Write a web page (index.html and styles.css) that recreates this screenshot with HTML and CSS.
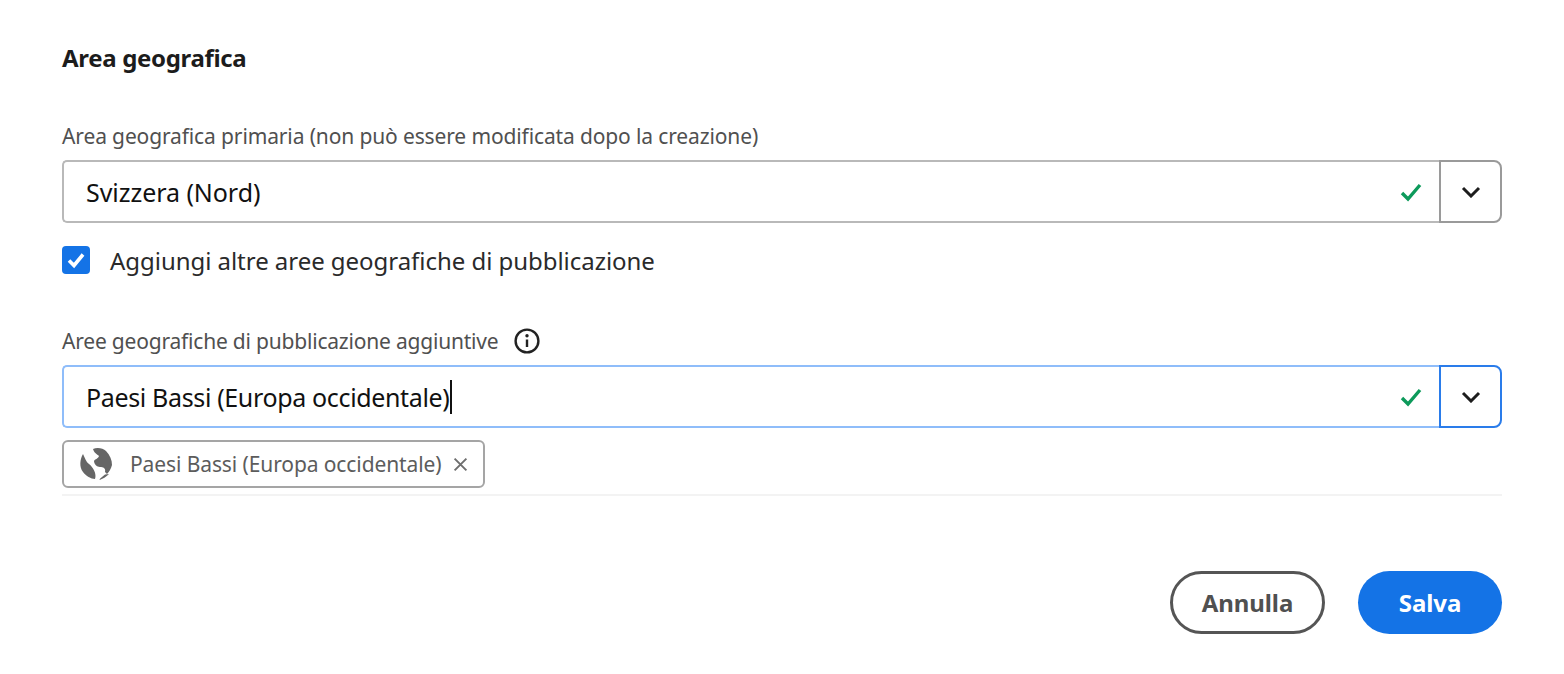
FILE: index.html
```html
<!DOCTYPE html>
<html lang="it">
<head>
    <meta charset="UTF-8">
    <title>Area geografica</title>
    <link rel="stylesheet" href="styles.css">
</head>
<body>

<form class="panel">
    <h2 class="title">Area geografica</h2>

    <div class="label primary-label">Area geografica primaria (non può essere modificata dopo la creazione)</div>
    <div class="combo">
        <div class="combo-input">
            <span class="combo-text">Svizzera (Nord)</span>
            <svg class="check" viewBox="0 0 22 20"><path d="M2 11l6 6L20 3"/></svg>
        </div>
        <div class="combo-btn">
            <svg class="chevron" viewBox="0 0 20 12"><path d="M2 2l8 8 8-8"/></svg>
        </div>
    </div>

    <div class="checkbox-row">
        <span class="checkbox">
            <svg viewBox="0 0 28 28"><path d="M7 14.5l5 5 9-11"/></svg>
        </span>
        <span class="checkbox-text">Aggiungi altre aree geografiche di pubblicazione</span>
    </div>

    <div class="label extra-label">
        Aree geografiche di pubblicazione aggiuntive
        <svg class="info" viewBox="0 0 26 26">
            <circle cx="13" cy="13" r="11.4"/>
            <path d="M13 11.5V19"/>
            <circle class="dot" cx="13" cy="7.8" r="1.7"/>
        </svg>
    </div>
    <div class="combo focused">
        <div class="combo-input">
            <span class="combo-text">Paesi Bassi (Europa occidentale)<span class="caret"></span></span>
            <svg class="check" viewBox="0 0 22 20"><path d="M2 11l6 6L20 3"/></svg>
        </div>
        <div class="combo-btn">
            <svg class="chevron" viewBox="0 0 20 12"><path d="M2 2l8 8 8-8"/></svg>
        </div>
    </div>

    <div class="chips">
        <div class="chip">
            <svg class="globe" viewBox="0 0 34 34">
                <path d="M4 7C1 12 0 20 4 25c3 4 8 7 12 7 2-5-2-12-6-15C7 15 6 11 4 7z"/>
                <path d="M14 2c4-2 10-1 13 2 4 4 6 9 6 14-1 4-3 7-5 9l-2-2c1-4-2-5-5-5s-6-3-6-6c1-2 4-2 5-5-2-2-5-3-6-7z"/>
                <path d="M20 33c4-1 7-3 10-6l-4 .5c-2 2-4 3-6 5.500z"/>
            </svg>
            <span class="chip-text">Paesi Bassi (Europa occidentale)</span>
            <svg class="close" viewBox="0 0 14 14"><path d="M1.500 1.500l11 11M12.500 1.500l-11 11"/></svg>
        </div>
    </div>

    <div class="actions">
        <button type="button" class="btn btn-cancel">Annulla</button>
        <button type="button" class="btn btn-save">Salva</button>
    </div>
</form>

</body>
</html>
```

FILE: styles.css
```css
body {
    font-family: "Noto Sans", Arial, sans-serif;
    background-color: #fff;
    margin: 0;
    padding: 0;
    color: #222;
}

.panel {
    padding: 42px 62px 0;
}

.title {
    margin: 0;
    font-size: 24px;
    line-height: 32px;
    font-weight: 700;
    letter-spacing: -0.33px;
    color: #1c1c1c;
}

.label {
    font-size: 21px;
    line-height: 26px;
    letter-spacing: -0.13px;
    color: #505050;
}

.primary-label {
    margin-top: 49px;
}

.extra-label {
    margin-top: 53px;
    display: flex;
    align-items: center;
    gap: 16px;
    letter-spacing: -0.2px;
}

.info {
    width: 26px;
    height: 26px;
    fill: none;
    stroke: #222;
    stroke-width: 2.4;
}

.info .dot {
    fill: #222;
    stroke: none;
}

.combo {
    display: flex;
    height: 63px;
    margin-top: 11px;
}

.combo-input {
    flex: 1;
    display: flex;
    align-items: center;
    justify-content: space-between;
    padding: 0 17px 0 22px;
    border: 2px solid #b9b9b9;
    border-right: none;
    border-radius: 5px 0 0 5px;
}

.combo-text {
    font-size: 25px;
    letter-spacing: -0.05px;
    color: #111;
    display: flex;
    align-items: center;
}

.combo-btn {
    width: 59px;
    display: flex;
    align-items: center;
    justify-content: center;
    border: 2px solid #9a9a9a;
    border-radius: 0 8px 8px 0;
}

.focused .combo-input {
    border-color: #8fbdfa;
}

.focused .combo-btn {
    border-color: #2a7cea;
}

.focused .combo-text {
    letter-spacing: -0.35px;
}

.caret {
    width: 2px;
    height: 34px;
    background-color: #111;
    margin-left: 1px;
}

.check {
    width: 22px;
    height: 20px;
    fill: none;
    stroke: #0d9a5b;
    stroke-width: 3.4;
}

.chevron {
    width: 20px;
    height: 12px;
    fill: none;
    stroke: #1d1d1d;
    stroke-width: 3;
}

.checkbox-row {
    display: flex;
    align-items: center;
    gap: 20px;
    margin-top: 22px;
}

.checkbox {
    width: 28px;
    height: 28px;
    border-radius: 4px;
    background-color: #1473e6;
    display: block;
}

.checkbox svg {
    display: block;
    fill: none;
    stroke: #fff;
    stroke-width: 3.6;
}

.checkbox-text {
    font-size: 24px;
    line-height: 28px;
    letter-spacing: -0.04px;
    color: #2a2a2a;
    padding-top: 2px;
}

.chips {
    margin-top: 12px;
    padding-bottom: 6px;
    border-bottom: 2px solid #f3f3f3;
}

.chip {
    display: inline-flex;
    align-items: center;
    box-sizing: border-box;
    width: 423px;
    height: 48px;
    border: 2px solid #a5a5a5;
    border-radius: 6px;
    padding: 0 15px;
}

.globe {
    width: 34px;
    height: 34px;
    flex: none;
    fill: #666;
}

.chip-text {
    font-size: 21px;
    letter-spacing: -0.1px;
    color: #5c5c5c;
    margin-left: 17px;
    white-space: nowrap;
}

.close {
    width: 15px;
    height: 15px;
    margin-left: 11px;
    fill: none;
    stroke: #6e6e6e;
    stroke-width: 1.8;
    flex: none;
}

.actions {
    display: flex;
    justify-content: flex-end;
    gap: 33px;
    margin-top: 75px;
}

.btn {
    height: 63px;
    border-radius: 32px;
    font-family: inherit;
    font-size: 24px;
    font-weight: 700;
    letter-spacing: -0.1px;
    cursor: pointer;
}

.btn-cancel {
    width: 155px;
    background-color: #fff;
    border: 3px solid #555;
    color: #505050;
}

.btn-save {
    width: 144px;
    background-color: #1473e6;
    border: none;
    color: #fff;
}
```
